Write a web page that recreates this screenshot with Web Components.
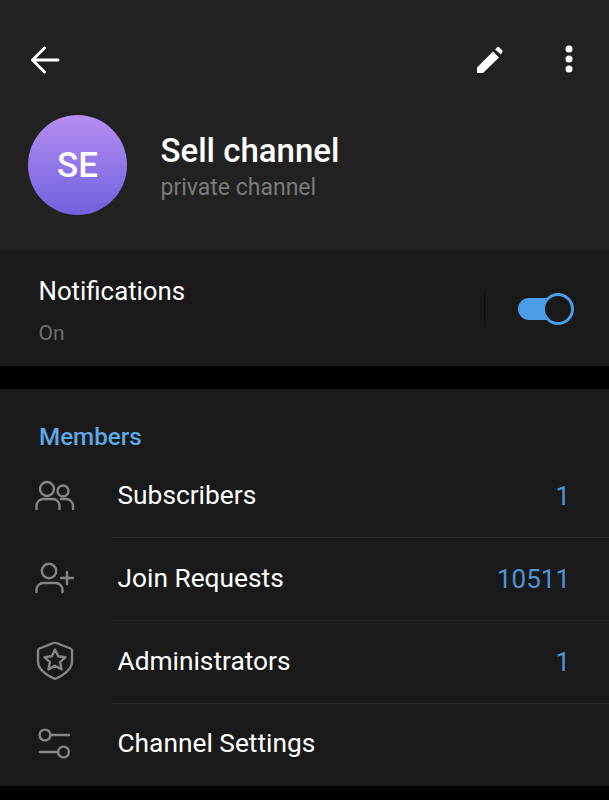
<!DOCTYPE html>
<html>
<head>
<meta charset="utf-8">
<style>
  html, body { margin: 0; background: #000; }
  body { font-family: Roboto, "Liberation Sans", sans-serif; height: 800px; overflow: hidden; }
</style>
</head>
<body>
<channel-header name="Sell channel" status="private channel" initials="SE"></channel-header>
<notify-row label="Notifications" state="On"></notify-row>
<info-section title="Members">
  <info-row label="Subscribers" value="1">
    <svg slot="icon" width="42" height="42" viewBox="0 0 42 42" fill="none" stroke="#858585" stroke-width="2.4" stroke-linecap="round">
      <circle cx="13" cy="13" r="7"/>
      <circle cx="29" cy="15" r="5.500"/>
      <path d="M2.500 33v-3c0-4 3-7 7-7h9c4 0 7 3 7 7v3"/>
      <path d="M27 23h5c4 0 7 3 7 7v3"/>
    </svg>
  </info-row>
  <info-row label="Join Requests" value="10511">
    <svg slot="icon" width="42" height="42" viewBox="0 0 42 42" fill="none" stroke="#858585" stroke-width="2.400" stroke-linecap="round">
      <circle cx="15" cy="12" r="7.200"/>
      <path d="M2.500 33v-2c0-4 3-7 7-7h12c4 0 7 3 7 7v2"/>
      <path d="M33 13v12M27 19h12"/>
    </svg>
  </info-row>
  <info-row label="Administrators" value="1">
    <svg slot="icon" width="42" height="42" viewBox="0 0 42 42" fill="none" stroke="#858585" stroke-width="2.400" stroke-linejoin="round">
      <g transform="translate(0 -2)">
        <path d="M21 2.500l15.500 6c1 .4 1.500 1 1.500 2v11c0 8-7 13-17 17.500C11 34.500 4 29.500 4 21.500v-11c0-1 .5-1.600 1.500-2z"/>
        <path d="M21 9.500l3.200 6.700 7.300.9-5.400 5 1.500 7.300-6.600-3.700-6.600 3.700 1.500-7.300-5.400-5 7.300-.9z"/>
      </g>
    </svg>
  </info-row>
  <info-row label="Channel Settings" last>
    <svg slot="icon" width="42" height="42" viewBox="0 0 42 42" fill="none" stroke="#858585" stroke-width="2.400" stroke-linecap="round">
      <circle cx="11" cy="10" r="5.400"/>
      <path d="M16.500 10h18.500"/>
      <circle cx="29.500" cy="27" r="5.400"/>
      <path d="M6 27h18"/>
    </svg>
  </info-row>
</info-section>

<script>
  /* top part: toolbar + avatar and name */
  class ChannelHeader extends HTMLElement {
    connectedCallback() {
      const root = this.attachShadow({ mode: 'open' });
      root.innerHTML = `
        <style>
          :host { display: block; background: #212121; height: 250px; box-sizing: border-box; padding: 38px 33px 0 28px; color: #fff; }
          .bar { display: flex; align-items: center; height: 44px; }
          .bar svg { display: block; flex: none; }
          .grow { flex: 1; }
          .who { display: flex; align-items: center; gap: 33.500px; margin-top: 33px; }
          .avatar { width: 99px; height: 100px; border-radius: 50%; flex: none; display: flex; align-items: center; justify-content: center;
            background: linear-gradient(#b58ef3, #6f61dc); font-size: 35px; font-weight: 500; }
          .name { font-size: 33px; font-weight: 500; line-height: 40px; margin-top: 1px; }
          .status { font-size: 23px; line-height: 26px; color: #7a7a7a; margin-top: 4px; }
        </style>
        <div class="bar">
          <svg width="32" height="32" viewBox="0 0 32 32" fill="none" stroke="#fff" stroke-width="3" stroke-linecap="round" stroke-linejoin="round">
            <path d="M30 16H4.500M16.500 4L4.500 16l12 12"/>
          </svg>
          <div class="grow"></div>
          <svg width="28" height="28" viewBox="0 0 28 28" fill="#fff">
            <path d="M0 27v-5.500L16 5.500l6 6L6 27z"/>
            <path d="M18 3.500l2.200-2.200c.6-.6 1.500-.6 2 0l3 3c.6.6.6 1.500 0 2L24 8.500z"/>
          </svg>
          <svg style="margin-left:57px;margin-top:-2px" width="14" height="32" viewBox="0 0 14 32" fill="#fff">
            <circle cx="7" cy="6" r="3.500"/><circle cx="7" cy="16" r="3.500"/><circle cx="7" cy="26" r="3.500"/>
          </svg>
        </div>
        <div class="who">
          <div class="avatar">${this.getAttribute('initials')}</div>
          <div>
            <div class="name">${this.getAttribute('name')}</div>
            <div class="status">${this.getAttribute('status')}</div>
          </div>
        </div>`;
    }
  }

  class NotifyRow extends HTMLElement {
    connectedCallback() {
      const root = this.attachShadow({ mode: 'open' });
      root.innerHTML = `
        <style>
          :host { display: flex; align-items: center; background: #191919; height: 116px; box-sizing: border-box; padding: 0 35px 0 38.500px; color: #fff; }
          .text { flex: 1; padding-top: 6px; }
          .label { font-size: 25.800px; line-height: 30px; }
          .state { font-size: 21px; line-height: 26px; color: #6f6f6f; margin-top: 14px; }
          .sep { width: 1px; height: 36px; background: #0e0e0e; margin: 2px 33px 0 0; }
          .toggle { position: relative; width: 56px; height: 34px; margin-top: 2px; }
          .track { position: absolute; left: 0; top: 6px; width: 40px; height: 22px; background: #4a9ce6; border-radius: 11px 0 0 11px; }
          .knob { position: absolute; right: 0; top: 1px; width: 32px; height: 32px; box-sizing: border-box; border-radius: 50%; border: 3px solid #4a9ce6; background: #191919; }
        </style>
        <div class="text">
          <div class="label">${this.getAttribute('label')}</div>
          <div class="state">${this.getAttribute('state')}</div>
        </div>
        <div class="sep"></div>
        <div class="toggle"><div class="track"></div><div class="knob"></div></div>`;
    }
  }

  class InfoSection extends HTMLElement {
    connectedCallback() {
      const root = this.attachShadow({ mode: 'open' });
      root.innerHTML = `
        <style>
          :host { display: block; background: #191919; margin-top: 23px; padding-top: 30px; height: 397px; box-sizing: border-box; }
          h2 { margin: 0 0 0 39px; font-size: 24.200px; line-height: 36px; font-weight: 500; color: #5ea9e6; }
        </style>
        <h2>${this.getAttribute('title')}</h2>
        <slot></slot>`;
    }
  }

  class InfoRow extends HTMLElement {
    connectedCallback() {
      const root = this.attachShadow({ mode: 'open' });
      const value = this.getAttribute('value');
      root.innerHTML = `
        <style>
          :host { display: flex; height: 83px; color: #fff; }
          .icon { width: 112px; flex: none; display: flex; align-items: center; padding-left: 34px; box-sizing: border-box; }
          .body { flex: 1; display: flex; align-items: center; justify-content: space-between; padding: 0 39px 2px 5.500px; border-bottom: 1px solid #262626; }
          :host([last]) .body { border-bottom: 0; padding-bottom: 5px; }
          .label { font-size: 26.300px; }
          .value { font-size: 26px; color: #4f94d4; padding-top: 2px; }
        </style>
        <div class="icon"><slot name="icon"></slot></div>
        <div class="body">
          <span class="label">${this.getAttribute('label')}</span>
          ${value ? `<span class="value">${value}</span>` : ''}
        </div>`;
    }
  }

  customElements.define('channel-header', ChannelHeader);
  customElements.define('notify-row', NotifyRow);
  customElements.define('info-section', InfoSection);
  customElements.define('info-row', InfoRow);
</script>
</body>
</html>
